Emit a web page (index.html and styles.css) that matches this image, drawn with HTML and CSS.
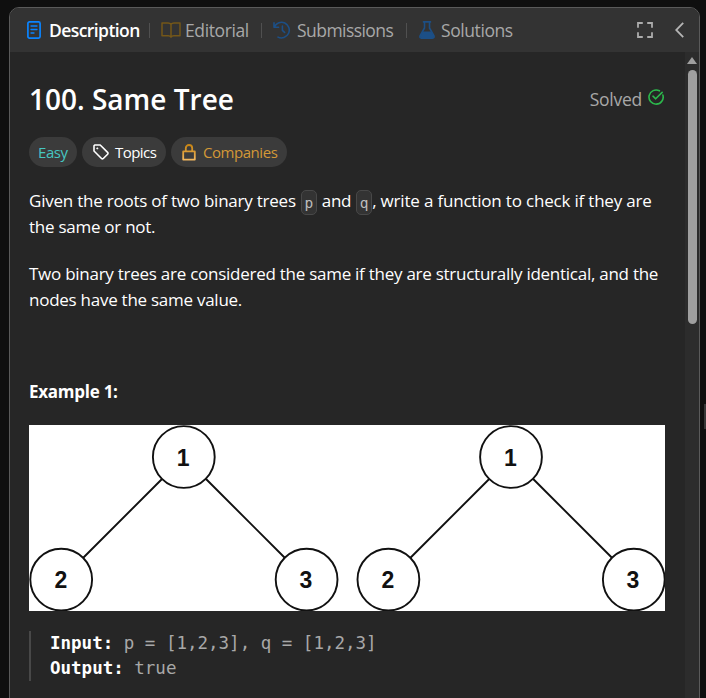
FILE: index.html
```html
<!DOCTYPE html>
<html lang="en">
<head>
<meta charset="utf-8">
<title>Same Tree</title>
<link rel="stylesheet" href="styles.css">
</head>
<body>
<main class="panel">
  <header class="tabs">
    <div class="tab tab-active">
      <svg class="icon-doc" width="14" height="18" viewBox="0 0 14 18" fill="none" stroke="#0a84ff" stroke-width="1.7"><rect x=".9" y=".9" width="12.2" height="16.2" rx="1.6"/><path d="M4 5h6M4 8.5h6M4 12h3" stroke-width="1.3" stroke-linecap="round"/></svg>
      <span class="t-description">Description</span>
    </div>
    <i class="divider"></i>
    <div class="tab">
      <svg class="icon-book" width="20" height="16" viewBox="0 0 20 16" fill="none" stroke="#745719" stroke-width="1.5" stroke-linejoin="round"><path d="M10 2.3Q9 1 7 1H1v12.7h6.2q2 0 2.8 1.4.8-1.4 2.8-1.4H19V1h-6q-2 0-3 1.3zM10 2.3V15"/></svg>
      <span class="t-editorial">Editorial</span>
    </div>
    <i class="divider"></i>
    <div class="tab">
      <svg class="icon-history" width="18" height="18" viewBox="0 0 18 18" fill="none" stroke="#1c4f86" stroke-width="1.6" stroke-linecap="round" stroke-linejoin="round"><path d="M1 1.8v4.4h4.6M1.4 5.8A7.8 7.8 0 1 1 5 16.1M9.4 5v4.4l2.2 2"/></svg>
      <span class="t-submissions">Submissions</span>
    </div>
    <i class="divider"></i>
    <div class="tab">
      <svg class="icon-flask" width="16" height="18" viewBox="0 0 16 18"><path d="M4.5.9h7M5.5 1v6L1.2 14.5Q.2 17 2.5 17.1h11q2.3-.1 1.3-2.6L10.5 7V1" fill="none" stroke="#1c4f86" stroke-width="1.6" stroke-linecap="round"/><path d="M3.8 10.5h8.4l2.7 4.6q.4 2-1.4 2h-11q-1.8 0-1.4-2z" fill="#1c4f86"/></svg>
      <span class="t-solutions">Solutions</span>
    </div>
    <div class="actions">
      <svg width="16" height="16" viewBox="0 0 16 16" fill="none" stroke="#acacac" stroke-width="1.8"><path d="M1 5.8V1h4.8M10.2 1H15v4.8M15 10.2V15h-4.8M5.8 15H1v-4.8"/></svg>
      <svg width="9" height="16" viewBox="0 0 9 16" fill="none" stroke="#b5b5b5" stroke-width="1.8"><path d="M8.2.9 1.2 8l7 7.1"/></svg>
    </div>
  </header>
  <div class="body">
    <article class="content">
      <div class="heading">
        <h1><span class="t-title">100. Same Tree</span></h1>
        <div class="solved"><span class="t-solved">Solved</span>
          <svg width="16" height="16" viewBox="0 0 16 16" fill="none" stroke="#2cb84c" stroke-width="1.6" stroke-linecap="round" stroke-linejoin="round"><path d="M14.9 6.1A7.1 7.1 0 1 1 11.4 1.8M5 7.2l2.7 2.6 6.4-6.4"/></svg>
        </div>
      </div>
      <div class="tags">
        <span class="tag easy"><span class="t-easy">Easy</span></span>
        <span class="tag topics"><svg width="16" height="16" viewBox="0 0 16 16" fill="none" stroke="#fff" stroke-width="1.6" stroke-linejoin="round"><path d="M1 1.7V7l7.5 7.5q.9.8 1.8 0l4.3-4.3q.8-.9 0-1.8L7.2 1H1.7z"/><circle cx="4.3" cy="4.4" r=".7" fill="#fff" stroke-width=".6"/></svg><span class="t-topics">Topics</span></span>
        <span class="tag companies"><svg width="14" height="17" viewBox="0 0 14 17" fill="none" stroke-width="1.8"><defs><linearGradient id="gold" x1="0" y1="1" x2="0" y2="0"><stop stop-color="#f2b75e"/><stop offset="1" stop-color="#c78413"/></linearGradient></defs><path d="M3.8 7.4V4.2a3.2 3.2 0 0 1 6.4 0v3.2M1.2 7.4h11.6v8.2H1.2z" stroke="url(#gold)" stroke-linejoin="round"/></svg><span class="t-companies">Companies</span></span>
      </div>
      <p class="first"><span class="line"><span class="a1">Given the roots of two binary trees</span> <code>p</code> <span class="a2">and</span> <code>q</code><span class="a3">, write a function to check if they are</span></span><span class="line a4">the same or not.</span></p>
      <p class="second"><span class="line"><span class="b1">Two binary trees are considered the same if they are structurally identical, and the</span></span><span class="line"><span class="b2">nodes have the same value.</span></span></p>
      <p class="example"><strong>Example 1:</strong></p>
      <svg class="trees" width="636" height="186" viewBox="0 0 636 186">
        <rect width="636" height="186" fill="#fff"/>
        <defs><g id="tree" fill="none" stroke="#111" stroke-width="1.9"><path d="M133 54 54 133M177 54l79 79"/><circle cx="154.8" cy="32" r="30.9"/><circle cx="32.2" cy="154.6" r="30.9"/><circle cx="277.6" cy="154.6" r="30.9"/></g></defs>
        <use href="#tree"/><use href="#tree" x="327.2"/>
        <g class="labels"><text x="154.2" y="40.5">1</text><text x="31.8" y="163">2</text><text x="277" y="163">3</text><text x="481.4" y="40.5">1</text><text x="358.8" y="163">2</text><text x="604" y="163">3</text></g>
      </svg>
      <pre><strong>Input:</strong> p = [1,2,3], q = [1,2,3]
<strong>Output:</strong> true</pre>
    </article>
    <div class="scrollbar"><i class="arrow"></i><i class="thumb"></i></div>
  </div>
</main>
<i class="grip"></i>
</body>
</html>
```
FILE: styles.css
```css
* { box-sizing: border-box; }
body {
  margin: 0;
  height: 698px;
  overflow: hidden;
  display: flex;
  background: #0f0f0f;
  color: #fff;
  font: 17px/26px "Open Sans", sans-serif;
  white-space: nowrap;
}
svg { display: block; flex: none; }
.panel {
  width: 691px;
  height: 720px;
  margin: 7px 0 0 9px;
  border: 1px solid #5a5a5a;
  border-radius: 10px;
  background: #262626;
  overflow: hidden;
  flex: none;
}
.tabs {
  height: 44px;
  padding: 0 15px 0 17px;
  display: flex;
  align-items: center;
  background: #333;
  color: #a8a8a8;
}
.tab { display: flex; align-items: center; height: 44px; }
.tab span { font-size: 17.5px; }
.tab-active { color: #fff; font-weight: 600; width: 122px; }
.tab .t-description { letter-spacing: -.58px; }
.tab .t-editorial { letter-spacing: -.38px; }
.tab .t-submissions { letter-spacing: -.55px; }
.tab .t-solutions { letter-spacing: -.42px; }
.icon-doc { margin-right: 8px; }
.tab:nth-of-type(2) { width: 100px; }
.tab:nth-of-type(3) { width: 133px; }
.icon-book { margin-right: 4px; }
.icon-history { margin-right: 6px; }
.icon-flask { margin: 0 6px 0 1px; }
.divider { width: 1px; height: 15px; background: #505050; flex: none; margin-right: 11px; }
.actions { display: flex; align-items: center; gap: 22px; margin-left: auto; }
.body { display: flex; }
.content { width: 675px; height: 650px; padding-left: 19px; }
.heading { display: flex; justify-content: space-between; width: 635px; height: 94px; align-items: center; }
h1 { margin: 0; font-size: 28px; font-weight: 600; }
.solved { display: flex; align-items: center; gap: 6px; color: #a8a8a8; font-size: 17.5px; letter-spacing: -.25px; padding-bottom: 1px; }
.solved svg { margin-bottom: 3px; }
.tags { height: 30px; margin-top: -9px; display: flex; gap: 5px; }
.tag { height: 30px; border-radius: 15px; background: #3b3b3b; display: flex; align-items: center; font-size: 15px; }
.easy { width: 48px; padding-left: 9px; color: #46c6c2; letter-spacing: -.45px; }
.topics { width: 84px; padding-left: 11px; gap: 6px; color: #fff; letter-spacing: -.55px; }
.companies { width: 116px; padding-left: 11px; gap: 7px; color: #d39837; letter-spacing: -.45px; }
p { margin: 0; letter-spacing: -.26px; }
.line { display: block; height: 26px; }
.first { margin-top: 21px; }
.first > .line:first-child { display: flex; }
.a1 { letter-spacing: -.23px; }
.a2 { letter-spacing: -.3px; }
.a3 { letter-spacing: -.19px; }
code {
  width: 16px;
  height: 25px;
  border: 1px solid #484848;
  border-radius: 5px;
  background: #333;
  color: #bdbdbd;
  font: 14.5px/25px "DejaVu Sans Mono", monospace;
  letter-spacing: 0;
  text-align: center;
  margin: 2px 5px 0;
}
code + .a3 { margin-left: -5px; }
.second { margin-top: 21px; }
.example { margin-top: 66px; }
.trees { margin-top: 20px; }
.labels { font: bold 23px "Liberation Sans", sans-serif; fill: #111; text-anchor: middle; }
pre {
  margin: 20px 0 0;
  height: 50px;
  border-left: 2px solid #484848;
  padding-left: 19px;
  color: #a8a8a8;
  font: 17.5px/25px "DejaVu Sans Mono", monospace;
}
pre strong { color: #fff; }
.scrollbar { width: 14px; height: 650px; background: #2c2c2c; display: flex; flex-direction: column; align-items: center; padding-top: 5px; }
.arrow { border: 5px solid transparent; border-top: 0; border-bottom: 7px solid #9f9f9f; }
.thumb { width: 9px; height: 254px; border-radius: 5px; background: #9f9f9f; margin-top: 6px; }
.grip { width: 2px; height: 25px; background: #383838; margin: 404px 0 0 auto; }
```
